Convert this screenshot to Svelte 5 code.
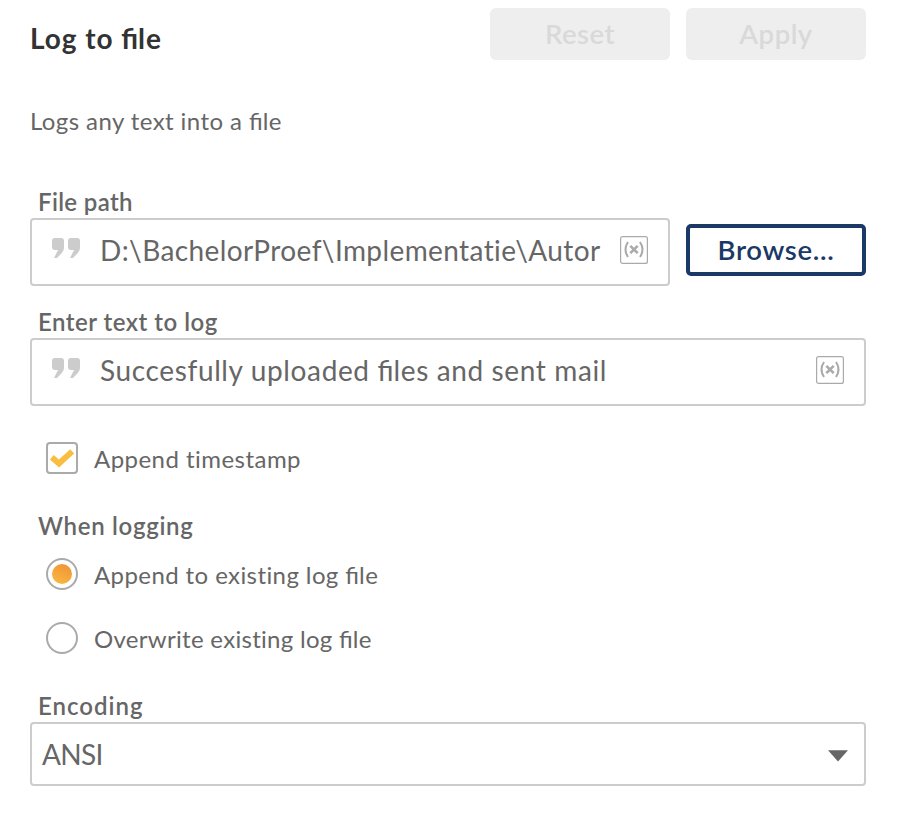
<script>
  let path = $state('D:\\BachelorProef\\Implementatie\\Autor');
  let text = $state('Succesfully uploaded files and sent mail');
  let timestamp = $state(true);
  let mode = $state('append');
  const modes = [
    { id: 'append', label: 'Append to existing log file' },
    { id: 'overwrite', label: 'Overwrite existing log file' }
  ];
</script>

{#snippet joined(s)}{#each s.split(/(fi)/) as part}{#if part === 'fi'}<span class="lig">fi</span>{:else}{part}{/if}{/each}{/snippet}

{#snippet field(value, cls)}
  <div class="field {cls}">
    <svg class="quote" width="30" height="21" viewBox="0 0 30 21" fill="#ccc">
      <path d="M4 0h6q3 0 3 3v7q0 2.500-1.800 4.600L6 20H3l4-8H4q-3 0-3-3V3q0-3 3-3z" />
      <path d="M20 0h6q3 0 3 3v7q0 2.500-1.800 4.600L22 20h-3l4-8h-3q-3 0-3-3V3q0-3 3-3z" />
    </svg>
    <span class="value {cls}-value">{@render joined(value)}</span>
    <svg class="var" width="28" height="28" viewBox="0 0 28 28" fill="none" stroke="#aaa">
      <rect x="0.600" y="0.600" width="26.800" height="26.800" rx="2" stroke-width="1.200" />
      <path stroke-width="2" d="M8 6q-5 7.500 0 15M20 6q5 7.500 0 15" />
      <path stroke-width="2.600" d="M10.300 9.800l7.400 7.400M17.700 9.800l-7.400 7.400" />
    </svg>
  </div>
{/snippet}

<main>
  <header>
    <h1>{@render joined('Log to file')}</h1>
    <button class="btn off" disabled>Reset</button>
    <button class="btn off" disabled>Apply</button>
  </header>
  <p class="desc">{@render joined('Logs any text into a file')}</p>

  <div class="label l1"><span>File path</span></div>
  <div class="row">
    {@render field(path, 'path')}
    <button class="btn browse">Browse...</button>
  </div>

  <div class="label l2"><span>Enter text to log</span></div>
  {@render field(text, 'text')}

  <div class="option check" role="checkbox" aria-checked={timestamp} tabindex="-1">
    <span class="box">
      <svg width="28" height="28" viewBox="0 0 28 28"><path d="M3.800 13.300L11 19.500L24.200 7.300" fill="none" stroke="#f9bd40" stroke-width="5.800" /></svg>
    </span>
    <span class="otext">Append timestamp</span>
  </div>

  <div class="label l3"><span>When logging</span></div>
  <div class="radios">
    {#each modes as m}
      <div class="option" role="radio" aria-checked={mode === m.id} tabindex="-1">
        <span class="circle">{#if mode === m.id}<i></i>{/if}</span>
        <span class="otext {m.id}">{@render joined(m.label)}</span>
      </div>
    {/each}
  </div>

  <div class="label l4"><span>Encoding</span></div>
  <div class="field select">
    <span class="ansi">ANSI</span>
    <svg class="caret" width="20" height="12" viewBox="0 0 20 12"><path d="M0 0.300h20L10 11.500z" fill="#666" /></svg>
  </div>
</main>

<style>
  :global(body) { margin: 0; background: #fff; }
  main {
    box-sizing: border-box;
    width: 898px;
    height: 820px;
    padding: 8px 32px 0 30px;
    font-family: Lato, "Open Sans", sans-serif;
    font-size: 24px;
    line-height: 30px;
    color: #666;
    white-space: nowrap;
    overflow: hidden;
  }
  .lig { letter-spacing: 0; font-feature-settings: "liga" 1; }
  header { display: flex; gap: 16px; height: 52px; align-items: center; }
  h1 { flex: 1; margin: 0; padding-top: 7px; font-size: 28px; line-height: 36px; font-weight: 700; color: #333; letter-spacing: 0.95px; }
  .btn {
    box-sizing: border-box;
    flex: none;
    width: 180px;
    height: 52px;
    margin: 0;
    padding: 0;
    border: 0;
    border-radius: 6px;
    font: 600 27.500px/36px Lato, "Open Sans", sans-serif;
    letter-spacing: 0.5px;
    background: #fff;
  }
  .off { background: #eee; color: #d9d9d9; }
  .browse { margin-bottom: 4px; border: 4px solid #1a3966; color: #1a3966; border-radius: 5px; letter-spacing: 0.7px; }
  .desc { margin: 46px 0 50px; letter-spacing: 0.42px; }
  .label { display: flex; height: 29px; padding-top: 1px; margin: 0 0 2px 8px; font-weight: 600; }
  .l1 { letter-spacing: 0.35px; }
  .l2 { letter-spacing: 0.5px; }
  .l3 { letter-spacing: 0.7px; }
  .l4 { letter-spacing: 1px; }
  .row { display: flex; align-items: center; justify-content: space-between; margin-bottom: 20px; }
  .field {
    box-sizing: border-box;
    display: flex;
    align-items: center;
    height: 68px;
    border: 2px solid #ccc;
    border-radius: 4px;
    padding: 0 20px 0 19px;
    font-size: 28px;
    line-height: 36px;
  }
  .path { width: 640px; }
  .quote { flex: none; margin: 0 19px 7px 0; }
  .value { flex: 1; padding-bottom: 4px; overflow: hidden; }
  .path-value { letter-spacing: 0.4px; }
  .text-value { letter-spacing: 0.63px; }
  .var { flex: none; margin-bottom: 4px; }
  .option { display: flex; align-items: center; gap: 16px; height: 32px; margin-left: 16px; }
  .otext { padding-top: 2px; letter-spacing: 0.46px; }
  .overwrite { letter-spacing: 0.3px; }
  .append { letter-spacing: 0.41px; }
  .check { margin-top: 36px; margin-bottom: 36px; }
  .box, .circle { box-sizing: border-box; display: flex; align-items: center; justify-content: center; width: 32px; height: 32px; border: 2px solid #aaa; border-radius: 4px; }
  .circle { border-radius: 50%; }
  .circle i { width: 20px; height: 20px; border-radius: 50%; background: linear-gradient(25deg, #f9bb42, #f09035); }
  .l3 { margin-bottom: 18px; }
  .radios { display: flex; flex-direction: column; gap: 32px; margin-bottom: 36px; }
  .select { height: 64px; padding: 0 16px 0 10px; justify-content: space-between; }
  .ansi { letter-spacing: -0.700px; }
  .caret { margin-top: 3px; }
</style>
